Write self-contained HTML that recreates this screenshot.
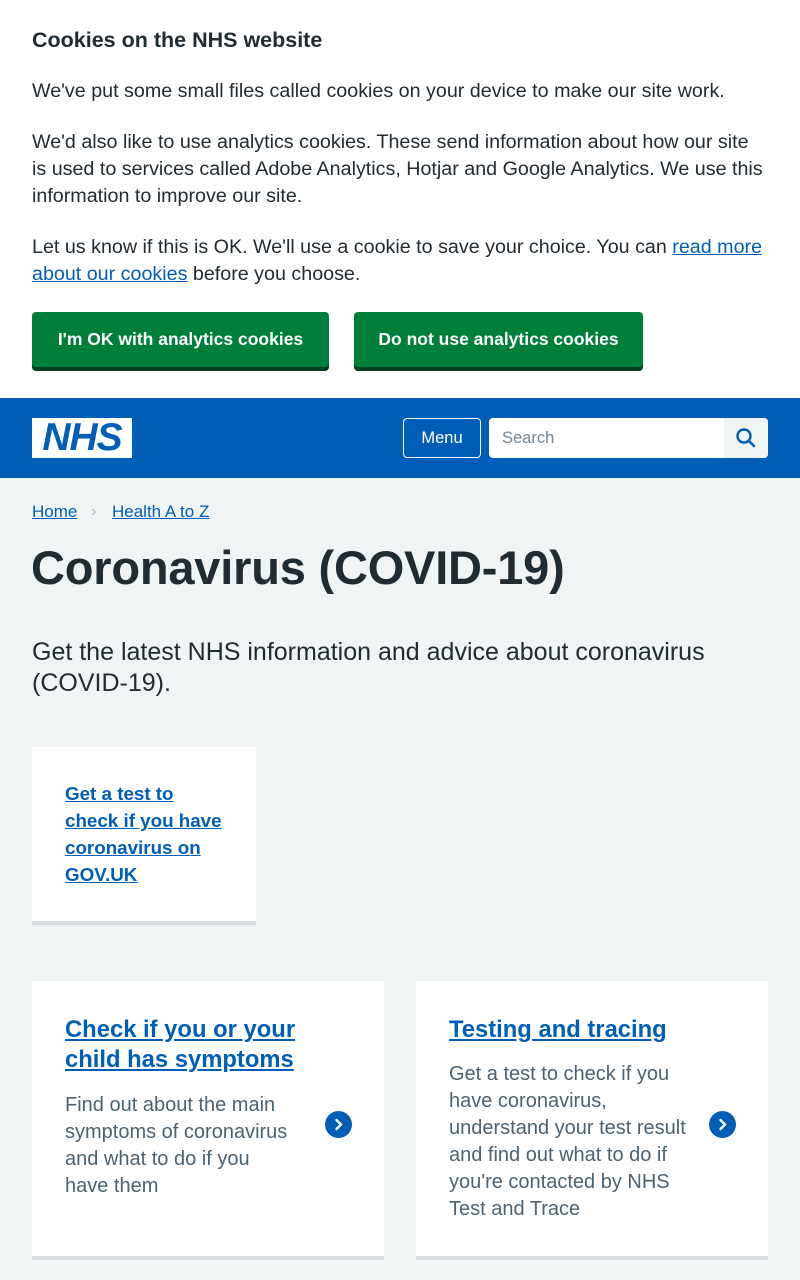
<!DOCTYPE html>
<html><head><meta charset="utf-8">
<style>
*{margin:0;padding:0;box-sizing:border-box}
body{width:800px;height:1280px;overflow:hidden;background:#f0f4f5;font-family:"Liberation Sans",sans-serif;color:#212b32;position:relative}
.a{position:absolute;white-space:nowrap}
a{color:#005eb8;text-decoration:underline}
.p{font-size:19.7px;line-height:27px}
.btn{position:absolute;top:312px;height:55px;background:#007f3b;border-radius:4px;box-shadow:0 4px 0 #00401e;color:#fff;font-weight:bold;font-size:17.5px;text-align:center;line-height:55px}
.card{position:absolute;background:#fff;border-bottom:4px solid #d8dde0}
.arr{position:absolute;width:27px;height:27px;border-radius:50%;background:#005eb8}
</style></head><body>
<div class="a" style="left:0;top:0;width:800px;height:398px;background:#fff"></div>
<div class="a" style="left:32px;top:26px;font-size:21.5px;font-weight:bold;line-height:28px">Cookies on the NHS website</div>
<div class="a p" style="left:32px;top:78px">We've put some small files called cookies on your device to make our site work.</div>
<div class="a p" style="left:32px;top:129px">We'd also like to use analytics cookies. These send information about how our site<br>is used to services called Adobe Analytics, Hotjar and Google Analytics. We use this<br>information to improve our site.</div>
<div class="a p" style="left:32px;top:234px">Let us know if this is OK. We'll use a cookie to save your choice. You can <a href="#">read more</a><br><a href="#">about our cookies</a> before you choose.</div>
<div class="btn" style="left:32px;width:297px">I'm OK with analytics cookies</div>
<div class="btn" style="left:354px;width:289px">Do not use analytics cookies</div>

<div class="a" style="left:0;top:398px;width:800px;height:80px;background:#005eb8"></div>
<div class="a" style="left:32px;top:418px;width:100px;height:40px;background:#fff;color:#005eb8;font-weight:bold;font-style:italic;font-size:39px;line-height:40px;text-align:center;letter-spacing:-1px">NHS</div>
<div class="a" style="left:403px;top:418px;width:78px;height:40px;border:1px solid #fff;border-radius:4px;color:#fff;font-size:16.5px;line-height:39px;text-align:center">Menu</div>
<div class="a" style="left:489px;top:418px;width:279px;height:40px;background:#fff;border-radius:4px"></div>
<div class="a" style="left:502px;top:418px;font-size:16.5px;line-height:40px;color:#768692">Search</div>
<div class="a" style="left:724px;top:418px;width:44px;height:40px;background:#f0f4f5;border-radius:0 4px 4px 0"></div>
<svg class="a" style="left:735px;top:427px" width="22" height="22" viewBox="0 0 22 22"><circle cx="9" cy="9" r="6.5" fill="none" stroke="#005eb8" stroke-width="2.4"/><path d="M14 14l5 5" stroke="#005eb8" stroke-width="2.6" stroke-linecap="round"/></svg>

<div class="a" style="left:32px;top:501px;font-size:17px;line-height:22px"><a href="#">Home</a></div>
<div class="a" style="left:91px;top:501px;font-size:16px;line-height:22px;color:#aeb7bd">›</div>
<div class="a" style="left:112px;top:501px;font-size:17px;line-height:22px"><a href="#">Health A to Z</a></div>
<div class="a" style="left:31px;top:538px;font-size:47px;font-weight:bold;line-height:60px;letter-spacing:-0.2px">Coronavirus (COVID-19)</div>
<div class="a" style="left:32px;top:637px;font-size:25px;line-height:31px">Get the latest NHS information and advice about coronavirus<br>(COVID-19).</div>

<div class="card" style="left:32px;top:747px;width:224px;height:178px"></div>
<div class="a" style="left:65px;top:780px;font-size:18.8px;font-weight:bold;line-height:27px"><a href="#">Get a test to<br>check if you have<br>coronavirus on<br>GOV.UK</a></div>

<div class="card" style="left:32px;top:981px;width:352px;height:279px"></div>
<div class="a" style="left:65px;top:1015px;font-size:23.8px;font-weight:bold;line-height:30px"><a href="#">Check if you or your<br>child has symptoms</a></div>
<div class="a p" style="left:65px;top:1092px;color:#4c6272;font-size:20px">Find out about the main<br>symptoms of coronavirus<br>and what to do if you<br>have them</div>
<div class="arr" style="left:325px;top:1111px"></div>
<svg class="a" style="left:325px;top:1111px" width="27" height="27" viewBox="0 0 27 27"><path d="M11.5 9l4.5 4.5-4.5 4.5" fill="none" stroke="#fff" stroke-width="2.4" stroke-linecap="round" stroke-linejoin="round"/></svg>

<div class="card" style="left:416px;top:981px;width:352px;height:279px"></div>
<div class="a" style="left:449px;top:1015px;font-size:23.8px;font-weight:bold;line-height:30px"><a href="#">Testing and tracing</a></div>
<div class="a p" style="left:449px;top:1061px;color:#4c6272;font-size:20px">Get a test to check if you<br>have coronavirus,<br>understand your test result<br>and find out what to do if<br>you're contacted by NHS<br>Test and Trace</div>
<div class="arr" style="left:709px;top:1111px"></div>
<svg class="a" style="left:709px;top:1111px" width="27" height="27" viewBox="0 0 27 27"><path d="M11.5 9l4.5 4.5-4.5 4.5" fill="none" stroke="#fff" stroke-width="2.4" stroke-linecap="round" stroke-linejoin="round"/></svg>
</body></html>
